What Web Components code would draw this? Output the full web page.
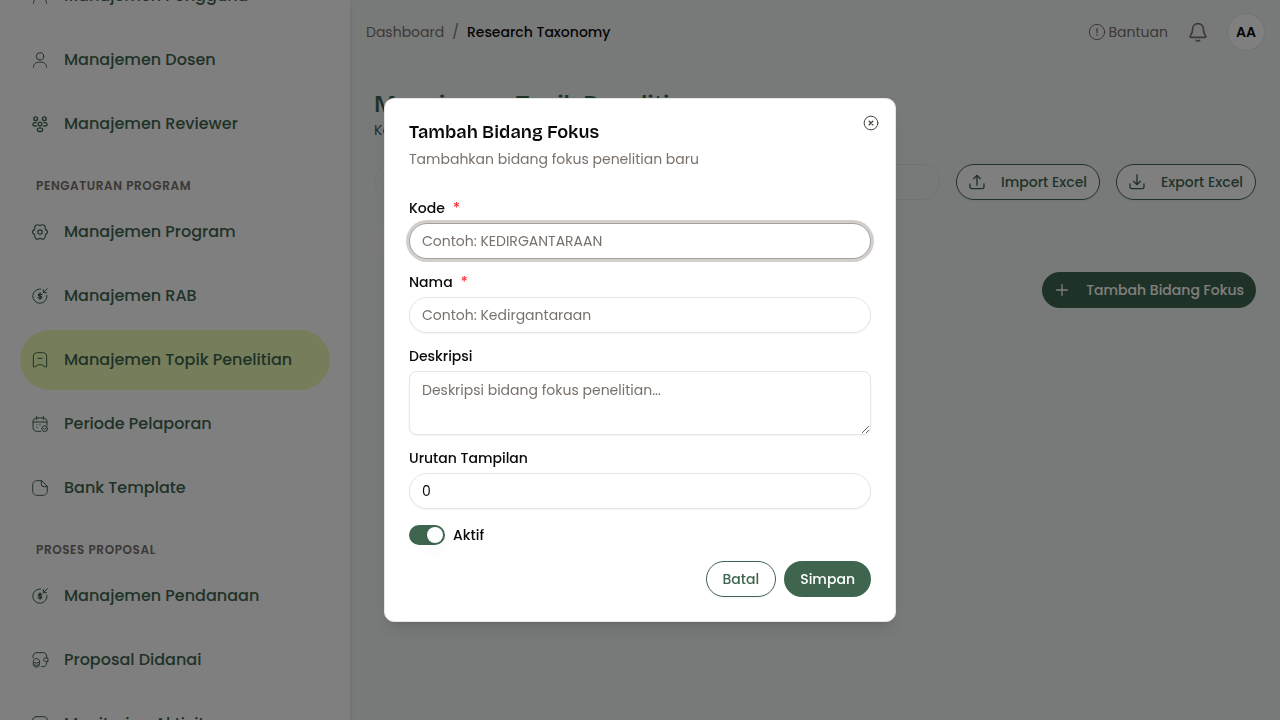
<!DOCTYPE html>
<html lang="id">
<head>
<meta charset="utf-8">
<meta name="viewport" content="width=device-width, initial-scale=1">
<title>Research Taxonomy</title>
<style>
  :root {
    --primary: #3f654e;
    --accent: #ecfab6;
    --ink: #0c0a09;
    --muted: #79716b;
    --line: #e5e5e5;
    --page: #f1f5f3;
    --display: "Bricolage Grotesque", Inter, sans-serif;
  }
  body {
    margin: 0;
    color: var(--ink);
    background: var(--page);
    font-family: Poppins, Inter, sans-serif;
    font-size: 14px;
    line-height: 20px;
  }
</style>
</head>
<body>
<app-shell>
  <side-nav slot="sidebar">
    <nav-item icon="user">Manajemen Pengguna</nav-item>
    <nav-item icon="user">Manajemen Dosen</nav-item>
    <nav-item icon="people">Manajemen Reviewer</nav-item>
    <nav-heading>PENGATURAN PROGRAM</nav-heading>
    <nav-item icon="gear">Manajemen Program</nav-item>
    <nav-item icon="money">Manajemen RAB</nav-item>
    <nav-item icon="bookmark" active>Manajemen Topik Penelitian</nav-item>
    <nav-item icon="calendar">Periode Pelaporan</nav-item>
    <nav-item icon="note">Bank Template</nav-item>
    <nav-heading>PROSES PROPOSAL</nav-heading>
    <nav-item icon="money">Manajemen Pendanaan</nav-item>
    <nav-item icon="wallet">Proposal Didanai</nav-item>
    <nav-item icon="monitor">Monitoring Aktivitas</nav-item>
  </side-nav>
  <top-bar slot="header"></top-bar>
  <taxonomy-page>
    <span slot="title">Manajemen Topik Penelitian</span>
    <span slot="subtitle">Kelola</span>
  </taxonomy-page>
</app-shell>

<modal-dialog>
  <span slot="title">Tambah Bidang Fokus</span>
  <span slot="description">Tambahkan bidang fokus penelitian baru</span>
  <form-field label="Kode" placeholder="Contoh: KEDIRGANTARAAN" required active></form-field>
  <form-field label="Nama" placeholder="Contoh: Kedirgantaraan" required></form-field>
  <form-field label="Deskripsi" placeholder="Deskripsi bidang fokus penelitian..." multiline></form-field>
  <form-field label="Urutan Tampilan" value="0"></form-field>
  <toggle-switch checked>Aktif</toggle-switch>
  <pill-button slot="actions" variant="outline">Batal</pill-button>
  <pill-button slot="actions">Simpan</pill-button>
</modal-dialog>

<script>
// All icons share a 24 unit grid
const ICONS = {
  user: '<circle cx="12" cy="6.5" r="5.5"/><path d="M2 23c0-5 4-8 10-8s10 3 10 8"/>',
  people: '<g stroke-width="2"><circle cx="5.5" cy="4" r="2.8"/><circle cx="18.5" cy="4" r="2.8"/><circle cx="12" cy="12" r="2.8"/><ellipse cx="12" cy="20.5" rx="4" ry="2.8"/><path d="M6 10H4.5C.5 10 .5 15 4 15h2.500M18 10h1.500c4 0 4 5 .5 5h-2.500"/></g>',
  gear: '<g stroke-width="1.8"><circle cx="12" cy="12" r="3.300"/><path d="M20 8C24.300 9.800 24.300 14.200 20 16 20.800 21.500 17 24.800 12 21.500 7 24.800 3.200 21.500 4 16-.3 14.200-.3 9.800 4 8 3.200 2.500 7-.8 12 2.500 17-.8 20.800 2.500 20 8z"/></g>',
  money: '<path d="M13 1.500A10.700 10.700 0 1 0 22.500 11M23 1l-6 6M17 2.500V7h4.500"/><path stroke-width="2" d="M14.700 10c-.8-1.500-5.200-1.500-5.200.4 0 2.500 5.200 1 5.200 3.500 0 2-4.500 2-5.500.3M12 7.500v9.500"/>',
  bookmark: '<path d="M2 7c0-4 2-6 6-6h8c4 0 6 2 6 6v15c0 .8-.8 1-1.500.6L16 20c-2.500-1.500-5.500-1.500-8 0l-4.500 2.600C2.800 23 2 22.800 2 22zM9 9.500h6"/>',
  calendar: '<path d="M7 .5v5M17 .5v5M1.500 9h21M13 23H8c-4.500 0-6.500-2-6.500-6V9c0-4 2-6 6.500-6h8c4.500 0 6.500 2 6.500 6v5"/><circle cx="19" cy="19" r="4.300"/><path d="M17.300 19l1.200 1.200 2.300-2.300M7.500 13v.5M7.500 17v.5M12 13v.5"/>',
  note: '<path d="M14 1H9C3 1 1 3 1 9v6c0 6 2 8 8 8h6c6 0 8-2 8-8v-5zM14 1v4c0 4 1 5 5 5h4"/>',
  wallet: '<path d="M1.500 8.500V7c0-4 2-6 6-6H16c4 0 6 2 6 6v1.500M22 14.500V16c0 4-2 6-6 6h-1.500M23.300 8.800H20.500c-4 0-4 5.400 0 5.400h2.800z"/><path d="M2 13.500c0-5 9-5 9 0v5.500c0 5-9 5-9 0zM2 15c1.500 2.300 7.500 2.300 9 0M2 18.500c1.500 2.300 7.500 2.300 9 0"/>',
  monitor: '<path d="M7 1h10c4 0 6 2 6 6v6c0 4-2 6-6 6H7c-4 0-6-2-6-6V7c0-4 2-6 6-6zM12 19v4M7 23h10"/>',
  info: '<circle cx="12" cy="12" r="11.500"/><path stroke-width="2" d="M12 7v6M12 16.500v.5"/>',
  bell: '<path d="M12 2c-4 0-6.500 3-6.500 6.500 0 5-1.500 6.500-2.700 8-.7.900-.2 2 1 2h16.400c1.200 0 1.700-1.100 1-2-1.200-1.500-2.700-3-2.700-8C18.500 5 16 2 12 2zM10 22c1 .8 3 .8 4 0"/>',
  upload: '<path d="M12 17V2M7 7l5-5 5 5M1.500 15v4.500c0 1.500 1 2.500 2.500 2.500h16c1.500 0 2.500-1 2.500-2.500V15"/>',
  download: '<path d="M12 1v15M7 11l5 5 5-5M1.500 15v4.500c0 1.500 1 2.500 2.500 2.500h16c1.500 0 2.500-1 2.500-2.500V15"/>',
  plus: '<path d="M12 4v16M4 12h16"/>',
  close: '<circle cx="12" cy="12" r="10.300"/><path stroke-width="2" d="M9.300 9.300l5.400 5.400M14.700 9.300l-5.400 5.400"/>'
};

class UiIcon extends HTMLElement {
  constructor() {
    super();
    this.attachShadow({ mode: 'open' });
  }
  connectedCallback() {
    const stroke = this.getAttribute('stroke') || '1.5';
    this.shadowRoot.innerHTML = `
      <style>
        :host { display: block; flex: none; width: 16px; height: 16px; }
        svg { display: block; width: 100%; height: 100%; overflow: visible; }
      </style>
      <svg viewBox="0 0 24 24" fill="none" stroke="currentColor" stroke-width="${stroke}"
        stroke-linecap="round" stroke-linejoin="round" aria-hidden="true">${ICONS[this.getAttribute('name')]}</svg>
    `;
  }
}
customElements.define('ui-icon', UiIcon);

// Two column frame: sidebar and page
class AppShell extends HTMLElement {
  constructor() {
    super();
    this.attachShadow({ mode: 'open' }).innerHTML = `
      <style>
        :host { display: flex; height: 100vh; overflow: hidden; }
        aside {
          flex: none;
          width: 350px;
          overflow: hidden;
          background: #fff;
          box-shadow: 0 4px 6px rgba(0, 0, 0, .1);
        }
        .page { flex: 1; min-width: 0; }
      </style>
      <aside><slot name="sidebar"></slot></aside>
      <div class="page">
        <slot name="header"></slot>
        <slot></slot>
      </div>
    `;
  }
}
customElements.define('app-shell', AppShell);

class SideNav extends HTMLElement {
  constructor() {
    super();
    this.attachShadow({ mode: 'open' }).innerHTML = `
      <style>
        :host { display: block; padding: 0 20px; }
        /* the list is scrolled part way down */
        nav { display: flex; flex-direction: column; gap: 4px; margin-top: -34px; }
      </style>
      <nav><slot></slot></nav>
    `;
  }
}
customElements.define('side-nav', SideNav);

class NavHeading extends HTMLElement {
  constructor() {
    super();
    this.attachShadow({ mode: 'open' }).innerHTML = `
      <style>
        :host {
          display: flex;
          align-items: center;
          height: 40px;
          padding: 16px 16px 0;
          box-sizing: border-box;
          font-size: 12px;
          font-weight: 600;
          letter-spacing: .05em;
          color: var(--muted);
        }
      </style>
      <slot></slot>
    `;
  }
}
customElements.define('nav-heading', NavHeading);

class NavItem extends HTMLElement {
  constructor() {
    super();
    this.attachShadow({ mode: 'open' });
  }
  connectedCallback() {
    this.shadowRoot.innerHTML = `
      <style>
        :host { display: block; }
        a {
          display: flex;
          align-items: center;
          gap: 16px;
          height: 60px;
          padding: 0 12px;
          border-radius: 30px;
          color: var(--primary);
          font-size: 16px;
          font-weight: 500;
          white-space: nowrap;
          text-decoration: none;
        }
        :host([active]) a { background: var(--accent); }
      </style>
      <a href="#"><ui-icon name="${this.getAttribute('icon')}"></ui-icon><slot></slot></a>
    `;
  }
}
customElements.define('nav-item', NavItem);

class TopBar extends HTMLElement {
  constructor() {
    super();
    this.attachShadow({ mode: 'open' }).innerHTML = `
      <style>
        :host {
          display: flex;
          align-items: center;
          justify-content: space-between;
          height: 64px;
          padding: 0 16px;
          color: var(--muted);
        }
        nav, .tools { display: flex; align-items: center; }
        nav { gap: 8px; }
        .tools { gap: 20px; }
        a { color: inherit; text-decoration: none; }
        .current { color: var(--ink); font-weight: 500; }
        .help { display: flex; align-items: center; gap: 4px; }
        button {
          padding: 0;
          border: 0;
          background: none;
          color: inherit;
          font: inherit;
        }
        .bell ui-icon { width: 20px; height: 20px; }
        .avatar {
          width: 36px;
          height: 36px;
          border-radius: 50%;
          background: #fff;
          color: var(--ink);
          font-weight: 600;
          box-shadow: 0 0 0 1px var(--line);
        }
      </style>
      <nav aria-label="Breadcrumb">
        <a href="#">Dashboard</a><span>/</span><span class="current">Research Taxonomy</span>
      </nav>
      <div class="tools">
        <a class="help" href="#"><ui-icon name="info"></ui-icon>Bantuan</a>
        <button class="bell" aria-label="Notifikasi"><ui-icon name="bell" stroke="2"></ui-icon></button>
        <button class="avatar">AA</button>
      </div>
    `;
  }
}
customElements.define('top-bar', TopBar);

class PillButton extends HTMLElement {
  constructor() {
    super();
    this.attachShadow({ mode: 'open' });
  }
  connectedCallback() {
    const icon = this.getAttribute('icon');
    this.shadowRoot.innerHTML = `
      <style>
        :host { display: block; flex: none; }
        button {
          display: flex;
          align-items: center;
          justify-content: center;
          gap: 16px;
          height: 36px;
          padding: 0 ${icon ? 12 : 16}px;
          border: 0;
          border-radius: 18px;
          background: var(--primary);
          color: #fff;
          font: inherit;
          font-weight: 500;
          white-space: nowrap;
        }
        :host([variant="outline"]) button {
          border: 1px solid var(--primary);
          background: #fff;
          color: var(--primary);
          box-shadow: 0 1px 2px rgba(0, 0, 0, .05);
        }
      </style>
      <button type="button">${icon ? `<ui-icon name="${icon}" stroke="2"></ui-icon>` : ''}<slot></slot></button>
    `;
  }
}
customElements.define('pill-button', PillButton);

class TaxonomyPage extends HTMLElement {
  constructor() {
    super();
    this.attachShadow({ mode: 'open' }).innerHTML = `
      <style>
        :host { display: block; padding: 24px; }
        h1 {
          margin: 0;
          color: var(--primary);
          font-family: var(--display);
          font-size: 24px;
          line-height: 32px;
          font-weight: 600;
        }
        p { margin: 0 0 24px; color: #4b5563; }
        .toolbar { display: flex; gap: 16px; }
        input {
          flex: 1;
          min-width: 0;
          height: 36px;
          box-sizing: border-box;
          padding: 0 16px;
          border: 1px solid var(--line);
          border-radius: 18px;
          background: none;
          font: inherit;
        }
        .tabs {
          width: 50%;
          height: 36px;
          margin: 24px 0 12px;
          border-radius: 18px;
          background: #f5f5f4;
        }
        .actions { display: flex; justify-content: flex-end; }
      </style>
      <h1><slot name="title"></slot></h1>
      <p><slot name="subtitle"></slot></p>
      <div class="toolbar">
        <input type="search" aria-label="Cari">
        <pill-button icon="upload" variant="outline">Import Excel</pill-button>
        <pill-button icon="download" variant="outline">Export Excel</pill-button>
      </div>
      <div class="tabs"></div>
      <div class="actions"><pill-button icon="plus">Tambah Bidang Fokus</pill-button></div>
    `;
  }
}
customElements.define('taxonomy-page', TaxonomyPage);

class FormField extends HTMLElement {
  constructor() {
    super();
    this.attachShadow({ mode: 'open' });
  }
  connectedCallback() {
    const hint = this.getAttribute('placeholder') || '';
    const value = this.getAttribute('value') || '';
    const required = this.hasAttribute('required');
    this.shadowRoot.innerHTML = `
      <style>
        :host { display: flex; flex-direction: column; gap: 8px; }
        label { display: flex; gap: 8px; line-height: 14px; font-weight: 500; }
        .star { color: #fb2c36; }
        input, textarea {
          display: block;
          width: 100%;
          box-sizing: border-box;
          margin: 0;
          padding: 0 12px;
          border: 1px solid var(--line);
          border-radius: 18px;
          outline: 0;
          background: #fff;
          color: inherit;
          font: inherit;
          box-shadow: 0 1px 2px rgba(0, 0, 0, .05);
        }
        input { height: 36px; }
        textarea { height: 64px; padding: 8px 12px; border-radius: 8px; resize: vertical; }
        ::placeholder { color: var(--muted); opacity: 1; }
        :host([active]) input { border-color: #a6a09b; box-shadow: 0 0 0 3px #d2cfcd; }
      </style>
      <label for="control">${this.getAttribute('label')}${required ? '<span class="star">*</span>' : ''}</label>
      ${this.hasAttribute('multiline')
        ? `<textarea id="control" placeholder="${hint}"></textarea>`
        : `<input id="control" type="text" placeholder="${hint}" value="${value}">`}
    `;
  }
}
customElements.define('form-field', FormField);

class ToggleSwitch extends HTMLElement {
  constructor() {
    super();
    this.attachShadow({ mode: 'open' });
  }
  connectedCallback() {
    this.shadowRoot.innerHTML = `
      <style>
        :host { display: block; }
        label { display: flex; align-items: center; gap: 8px; font-weight: 500; }
        input {
          appearance: none;
          display: flex;
          width: 36px;
          height: 20px;
          box-sizing: border-box;
          margin: 0;
          padding: 2px;
          border-radius: 10px;
          background: var(--line);
        }
        input::before {
          content: "";
          width: 16px;
          height: 16px;
          border-radius: 50%;
          background: #fff;
          box-shadow: 0 10px 15px -3px rgba(0, 0, 0, .1);
        }
        input:checked { justify-content: flex-end; background: var(--primary); }
      </style>
      <label><input type="checkbox" role="switch" ${this.hasAttribute('checked') ? 'checked' : ''}><slot></slot></label>
    `;
  }
}
customElements.define('toggle-switch', ToggleSwitch);

class ModalDialog extends HTMLElement {
  constructor() {
    super();
    this.attachShadow({ mode: 'open' }).innerHTML = `
      <style>
        /* backdrop over the whole window */
        :host {
          position: fixed;
          inset: 0;
          display: flex;
          align-items: center;
          justify-content: center;
          background: rgba(0, 0, 0, .5);
        }
        section {
          width: 100%;
          max-width: 512px;
          box-sizing: border-box;
          padding: 24px;
          border: 1px solid var(--line);
          border-radius: 10px;
          background: #fff;
          box-shadow: 0 10px 15px -3px rgba(0, 0, 0, .1), 0 4px 6px -4px rgba(0, 0, 0, .1);
        }
        header { display: flex; justify-content: space-between; margin-bottom: 32px; }
        h2 {
          margin: 0 0 8px;
          font-family: var(--display);
          font-size: 18px;
          line-height: 18px;
          font-weight: 600;
        }
        p { margin: 0; color: var(--muted); }
        .close {
          align-self: flex-start;
          margin: -16px -16px 0 0;
          padding: 8px;
          border: 0;
          background: none;
          color: #44403b;
        }
        form { display: flex; flex-direction: column; gap: 16px; }
        footer { display: flex; justify-content: flex-end; gap: 8px; }
      </style>
      <section role="dialog" aria-modal="true" aria-labelledby="title">
        <header>
          <div>
            <h2 id="title"><slot name="title"></slot></h2>
            <p><slot name="description"></slot></p>
          </div>
          <button class="close" aria-label="Tutup"><ui-icon name="close"></ui-icon></button>
        </header>
        <form>
          <slot></slot>
          <footer><slot name="actions"></slot></footer>
        </form>
      </section>
    `;
  }
}
customElements.define('modal-dialog', ModalDialog);
</script>
</body>
</html>
